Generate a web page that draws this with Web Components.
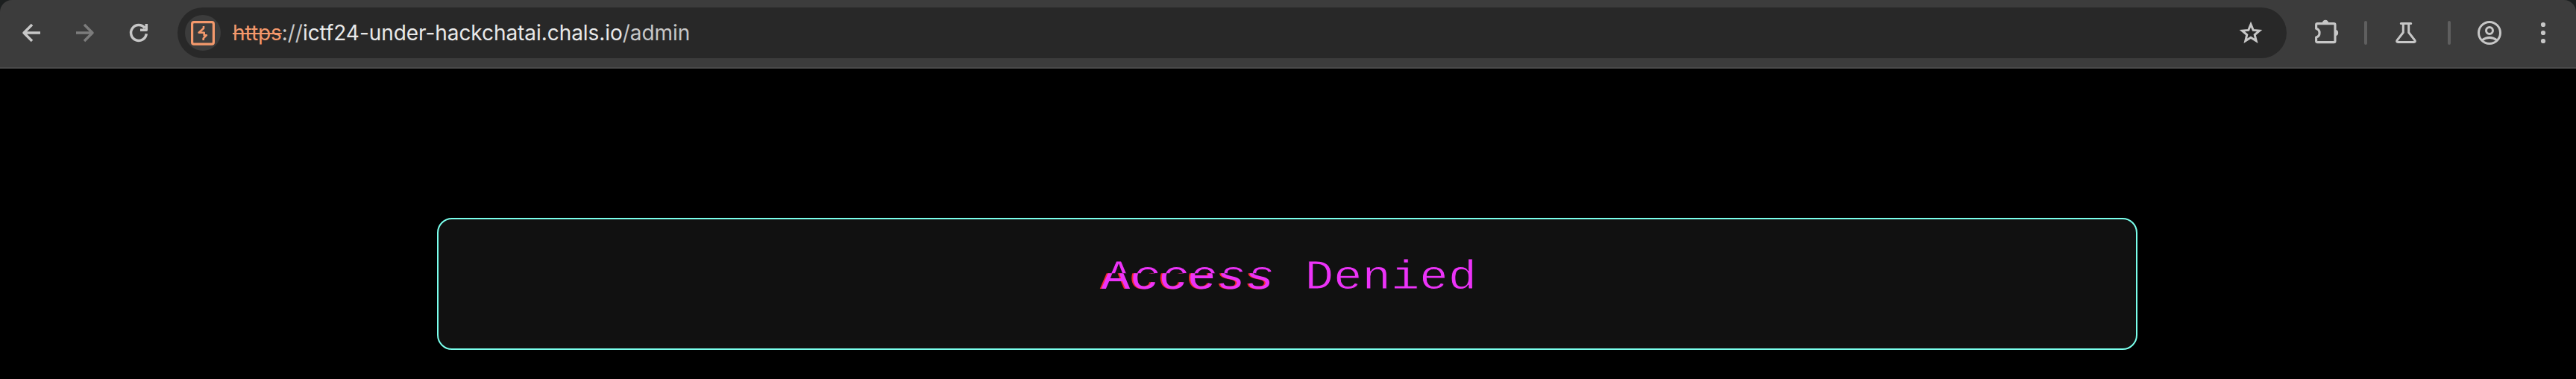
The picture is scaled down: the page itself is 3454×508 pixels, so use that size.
<!DOCTYPE html>
<html lang="en">
<head>
<meta charset="utf-8">
<title>Access Denied</title>
<style>
html,body{margin:0;background:#000;height:508px;overflow:hidden}
</style>
</head>
<body>
<browser-window></browser-window>
<script>
const define=(name,html)=>customElements.define(name,class extends HTMLElement{
  constructor(){super();this.attachShadow({mode:'open'}).innerHTML=html;}
});

const ICONS={
  back:[24,24,'<path d="M24 12H2.5M13 .9 2 12l11 11.1" stroke-width="3.5"/>'],
  forward:[24,24,'<path d="M0 12h21.5M11 .9 22 12 11 23.1" stroke-width="3.5"/>'],
  reload:[24,24,'<path d="M22.3 13.2A10.4 10.4 0 1 1 20.2 5.6M22.3 0v8.3H14" stroke-width="3.5"/>'],
  burp:[32,33,'<rect x="1.6" y="1.6" width="28.8" height="29.6" rx="2.4" stroke-width="3.2"/><path d="M17 7v3L10.6 15.7h7.1v3.5h3.2L16.7 23.4V26" stroke-width="2.6"/>'],
  star:[32,32,'<path d="m16 4.7 3.2 7.7 8.4.7-6.4 5.4 2 8.3-7.2-4.5-7.2 4.5 2-8.3-6.4-5.4 8.4-.7z" stroke-width="3" stroke-linejoin="miter"/>'],
  puzzle:[32,32,'<path d="M1.6 12.2V7.3q0-1.7 1.7-1.7h22q1.7 0 1.7 1.7v22q0 1.3-1.7 1.3h-22q-1.7 0-1.7-1.3v-5.2a6.2 6.2 0 0 0 0-11.9z" stroke-width="3.1"/><path d="M9.8 5a4.2 4.2 0 0 1 8.4 0zM27.5 13.8a4.3 4.3 0 0 1 0 8.5z" fill="currentColor" stroke="none"/>'],
  flask:[28,28,'<path d="M7.3 1.5h13.4M10.3 1.5v12L2 24.2q-1.1 2.2 1.3 2.3h21.4q2.4-.1 1.3-2.3L17.7 13.5v-12" stroke-width="3" stroke-linecap="round"/>'],
  profile:[32,32,'<circle cx="16" cy="16" r="14.5" stroke-width="3"/><circle cx="16" cy="13" r="4.5" stroke-width="3"/><path d="M5.8 26q10.2-7.2 20.4 0" stroke-width="3"/>'],
  dots:[6,28,'<g fill="currentColor" stroke="none"><circle cx="3" cy="3" r="3.1"/><circle cx="3" cy="14" r="3.1"/><circle cx="3" cy="25" r="3.1"/></g>']
};
customElements.define('ui-icon',class extends HTMLElement{
  connectedCallback(){
    const [w,h,p]=ICONS[this.getAttribute('name')];
    this.attachShadow({mode:'open'}).innerHTML=`<style>:host{display:block;flex:none}svg{display:block;overflow:visible}</style>
    <svg width="${w}" height="${h}" viewBox="0 0 ${w} ${h}" fill="none" stroke="currentColor" stroke-linejoin="round">${p}</svg>`;
  }
});

define('address-bar',`<style>
:host{display:flex;align-items:center;box-sizing:border-box;flex:none;width:2828px;height:68px;border-radius:34px;background:#282828;padding:0 32px 0 10px}
.site{width:48px;height:48px;border-radius:50%;background:#3c3c3c;display:flex;align-items:center;justify-content:center;color:#f4996c}
.url{flex:1;margin-left:16px;font:400 28px/36px Inter,sans-serif;color:#c7c7c7;white-space:nowrap;letter-spacing:-.06px}
.scheme{color:#f4996c;text-decoration:line-through;text-decoration-thickness:2px}
.host{color:#e9e9e9}
.star{color:#c7c7c7}
</style>
<span class="site"><ui-icon name="burp"></ui-icon></span>
<span class="url"><span class="scheme">https</span>://<span class="host">ictf24-under-hackchatai.chals.io</span>/admin</span>
<ui-icon class="star" name="star"></ui-icon>`);

define('browser-toolbar',`<style>
:host{display:flex;align-items:center;box-sizing:border-box;height:92px;padding:0 0 2px 30px;border-bottom:2px solid #4a4a4a;background:#3c3c3c;border-radius:16px 16px 0 0;color:#c7c7c7}
nav{display:flex;gap:48px;margin-right:40px}
.off{color:#7c7c7c}
.tools{display:flex;align-items:center;margin-left:38px}
i{width:4px;height:32px;border-radius:2px;background:#5f5f5f;margin:0 38px 0 34px}
i+ui-icon+i{margin:0 36px 0 42px}
</style>
<nav><ui-icon name="back"></ui-icon><ui-icon class="off" name="forward"></ui-icon><ui-icon name="reload"></ui-icon></nav>
<address-bar></address-bar>
<div class="tools"><ui-icon name="puzzle" style="margin-top:-4px"></ui-icon><i></i><ui-icon name="flask"></ui-icon><i></i><ui-icon name="profile"></ui-icon><ui-icon name="dots" style="margin-left:53px"></ui-icon></div>`);

define('glitch-word',`<style>
:host{display:inline-block;position:relative}
.top{display:block;clip-path:inset(0 -10px 42.5px -10px)}
.word::after{content:"Access";position:absolute;left:-4px;top:0;clip-path:inset(29.5px -10px 0 -10px);text-shadow:-2px 0 #f22b2b;-webkit-text-stroke:0}
</style><span class="word"><span class="top"><slot></slot></span></span>`);

define('message-card',`<style>
:host{display:flex;justify-content:center;box-sizing:border-box;width:2280px;height:177px;border:2px solid #7affec;border-radius:20px;background:#111;padding:40px 0 0 9px}
h1{margin:0;height:72px;font:400 64px/72px "Courier New","Liberation Mono",monospace;color:#ec33f8;white-space:pre;-webkit-text-stroke:1px #111;transform:scaleY(.88);transform-origin:0 53px}
</style><h1><slot></slot></h1>`);

define('browser-window',`<style>
:host{display:block;background:#000}
.chrome{background:#1c1f1f}
main{display:flex;justify-content:center;padding:200px 2px 0 0}
</style>
<div class="chrome"><browser-toolbar></browser-toolbar></div>
<main><message-card><glitch-word>Access</glitch-word> Denied</message-card></main>`);
</script>
</body>
</html>
